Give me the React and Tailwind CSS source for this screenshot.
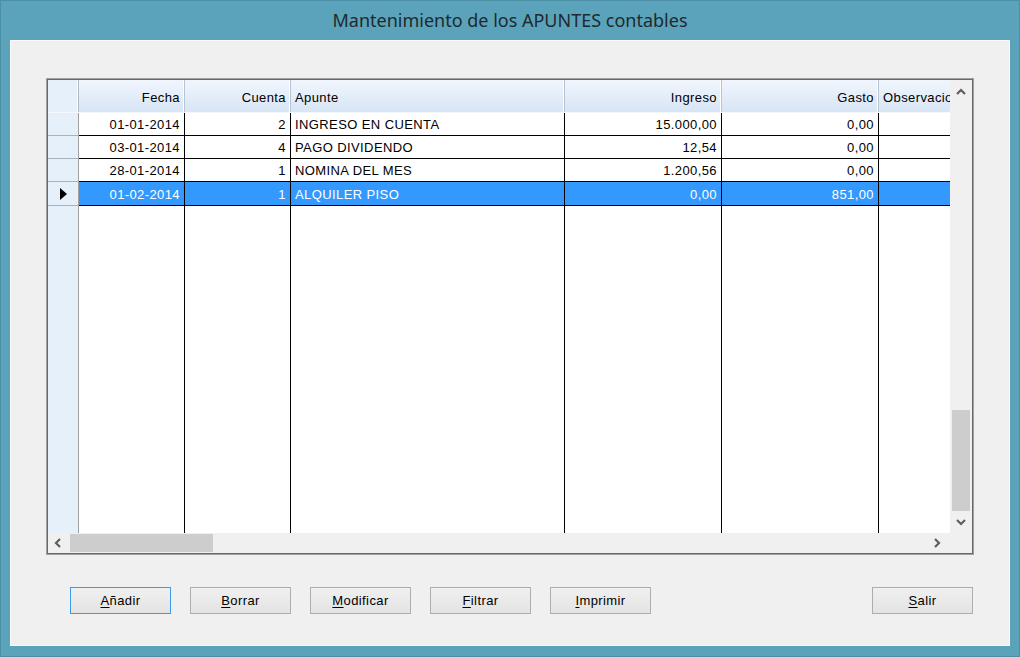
import React from "react";

const FONT = { fontFamily: '"Liberation Sans", Arial, sans-serif' };

const cols = [
  { w: "w-[106px]", label: "Fecha", al: "justify-end pr-[4px]" },
  { w: "w-[106px]", label: "Cuenta", al: "justify-end pr-[4px]" },
  { w: "w-[274px]", label: "Apunte", al: "justify-start pl-[4px]" },
  { w: "w-[157px]", label: "Ingreso", al: "justify-end pr-[4px]" },
  { w: "w-[157px]", label: "Gasto", al: "justify-end pr-[4px]" },
  { w: "w-[130px]", label: "Observaciones", al: "justify-start pl-[4px]" },
];

const rows = [
  ["01-01-2014", "2", "INGRESO EN CUENTA", "15.000,00", "0,00", ""],
  ["03-01-2014", "4", "PAGO DIVIDENDO", "12,54", "0,00", ""],
  ["28-01-2014", "1", "NOMINA DEL MES", "1.200,56", "0,00", ""],
  ["01-02-2014", "1", "ALQUILER PISO", "0,00", "851,00", ""],
];

function Chevron({ dir }) {
  const pts = {
    up: "2,7 6,3 10,7",
    down: "2,4 6,8 10,4",
    left: "7,2 3,6 7,10",
    right: "4,2 8,6 4,10",
  }[dir];
  return (
    <svg width="12" height="12" viewBox="0 0 12 12">
      <polyline points={pts} fill="none" stroke="#5f5f5f" strokeWidth="2.2" />
    </svg>
  );
}

function Btn({ first, rest, focused }) {
  return (
    <div
      className={
        "w-[101px] h-[27px] flex items-center justify-center pt-[1px] text-[13px] tracking-[0.4px] text-black bg-gradient-to-b from-[#f0f0f0] to-[#e3e3e3] border " +
        (focused ? "border-[#3c9bee]" : "border-[#adadad]")
      }
    >
      <span>
        <span className="underline underline-offset-2">{first}</span>
        {rest}
      </span>
    </div>
  );
}

export default function App() {
  return (
    <div
      className="w-[1020px] h-[657px] bg-[#5ba3ba] border border-[#4b8fa6] flex flex-col overflow-hidden"
      style={FONT}
    >
      <div className="h-[39px] flex items-center justify-center">
        <span
          className="text-[18px] text-[#1e2a2e]"
          style={{ fontFamily: '"Noto Sans", "Open Sans", sans-serif' }}
        >
          Mantenimiento de los APUNTES contables
        </span>
      </div>
      <div className="mx-[9px] mb-[10px] flex-1 bg-[#f0f0f0] border border-[#fafafa] pl-[35px] pt-[37px] flex flex-col">
        {/* grid */}
        <div className="w-[928px] h-[477px] border border-[#a0a0a0]">
          <div className="w-full h-full border border-[#696969] flex flex-col bg-white">
            <div className="flex-1 flex min-h-0">
              <div className="flex-1 overflow-hidden flex flex-col">
                {/* header */}
                <div className="h-[33px] flex shrink-0 bg-gradient-to-b from-[#f1f6fd] to-[#d7e5f5] border-b border-[#f4f8fc]">
                  <div className="w-[31px] shrink-0 bg-[#e6f0fb] border-r border-[#b0b8c2] shadow-[inset_-1px_0_0_#fff]" />
                  {cols.map((c, i) => (
                    <div
                      key={i}
                      className={
                        c.w +
                        " shrink-0 flex items-center pt-[3px] text-[13px] tracking-[0.4px] text-black whitespace-nowrap overflow-hidden border-r border-[#b9c4d2] shadow-[inset_-1px_0_0_#fff] " +
                        c.al
                      }
                    >
                      {c.label}
                    </div>
                  ))}
                </div>
                {/* data rows */}
                {rows.map((r, ri) => {
                  const sel = ri === 3;
                  return (
                    <div key={ri} className={(sel ? "h-[24px]" : "h-[23px]") + " flex shrink-0"}>
                      <div className="w-[31px] shrink-0 bg-[#e6f0fb] border-r border-[#a0a0a0] border-b border-b-[#a9b3be] flex items-center justify-center">
                        {sel && (
                          <svg width="8" height="12" viewBox="0 0 8 12">
                            <polygon points="1,0 8,6 1,12" fill="#000" />
                          </svg>
                        )}
                      </div>
                      {cols.map((c, ci) => (
                        <div
                          key={ci}
                          className={
                            c.w +
                            " shrink-0 flex items-center pt-[2px] text-[13px] tracking-[0.4px] whitespace-nowrap overflow-hidden border-r border-b border-black " +
                            c.al +
                            (sel ? " bg-[#3399ff] text-white" : " bg-white text-black")
                          }
                        >
                          {r[ci]}
                        </div>
                      ))}
                    </div>
                  );
                })}
                {/* filler */}
                <div className="flex-1 flex">
                  <div className="w-[31px] shrink-0 bg-[#e6f0fb] border-r border-[#a0a0a0]" />
                  {cols.map((c, ci) => (
                    <div key={ci} className={c.w + " shrink-0 bg-white border-r border-black"} />
                  ))}
                </div>
              </div>
              {/* vertical scrollbar */}
              <div className="w-[22px] shrink-0 bg-[#f0f0f0] flex flex-col items-center">
                <div className="h-[22px] flex items-center justify-center mt-[2px]">
                  <Chevron dir="up" />
                </div>
                <div className="flex-1 w-full flex flex-col justify-end px-[2px]">
                  <div className="h-[101px] bg-[#cdcdcd]" />
                </div>
                <div className="h-[22px] flex items-center justify-center">
                  <Chevron dir="down" />
                </div>
              </div>
            </div>
            {/* horizontal scrollbar */}
            <div className="h-[20px] shrink-0 flex bg-[#f0f0f0]">
              <div className="flex-1 flex items-center">
                <div className="w-[22px] h-full flex items-center justify-center">
                  <Chevron dir="left" />
                </div>
                <div className="w-[143px] h-[18px] bg-[#cdcdcd]" />
                <div className="flex-1" />
                <div className="w-[22px] h-full flex items-center justify-center mr-[2px]">
                  <Chevron dir="right" />
                </div>
              </div>
              <div className="w-[22px] shrink-0 bg-[#f0f0f0]" />
            </div>
          </div>
        </div>
        {/* buttons */}
        <div className="mt-[32px] w-[928px] pl-[24px] flex items-center">
          <div className="flex gap-[19px]">
            <Btn first="A" rest="ñadir" focused />
            <Btn first="B" rest="orrar" />
            <Btn first="M" rest="odificar" />
            <Btn first="F" rest="iltrar" />
            <Btn first="I" rest="mprimir" />
          </div>
          <div className="flex-1" />
          <div className="mr-[1px]">
            <Btn first="S" rest="alir" />
          </div>
        </div>
      </div>
    </div>
  );
}
